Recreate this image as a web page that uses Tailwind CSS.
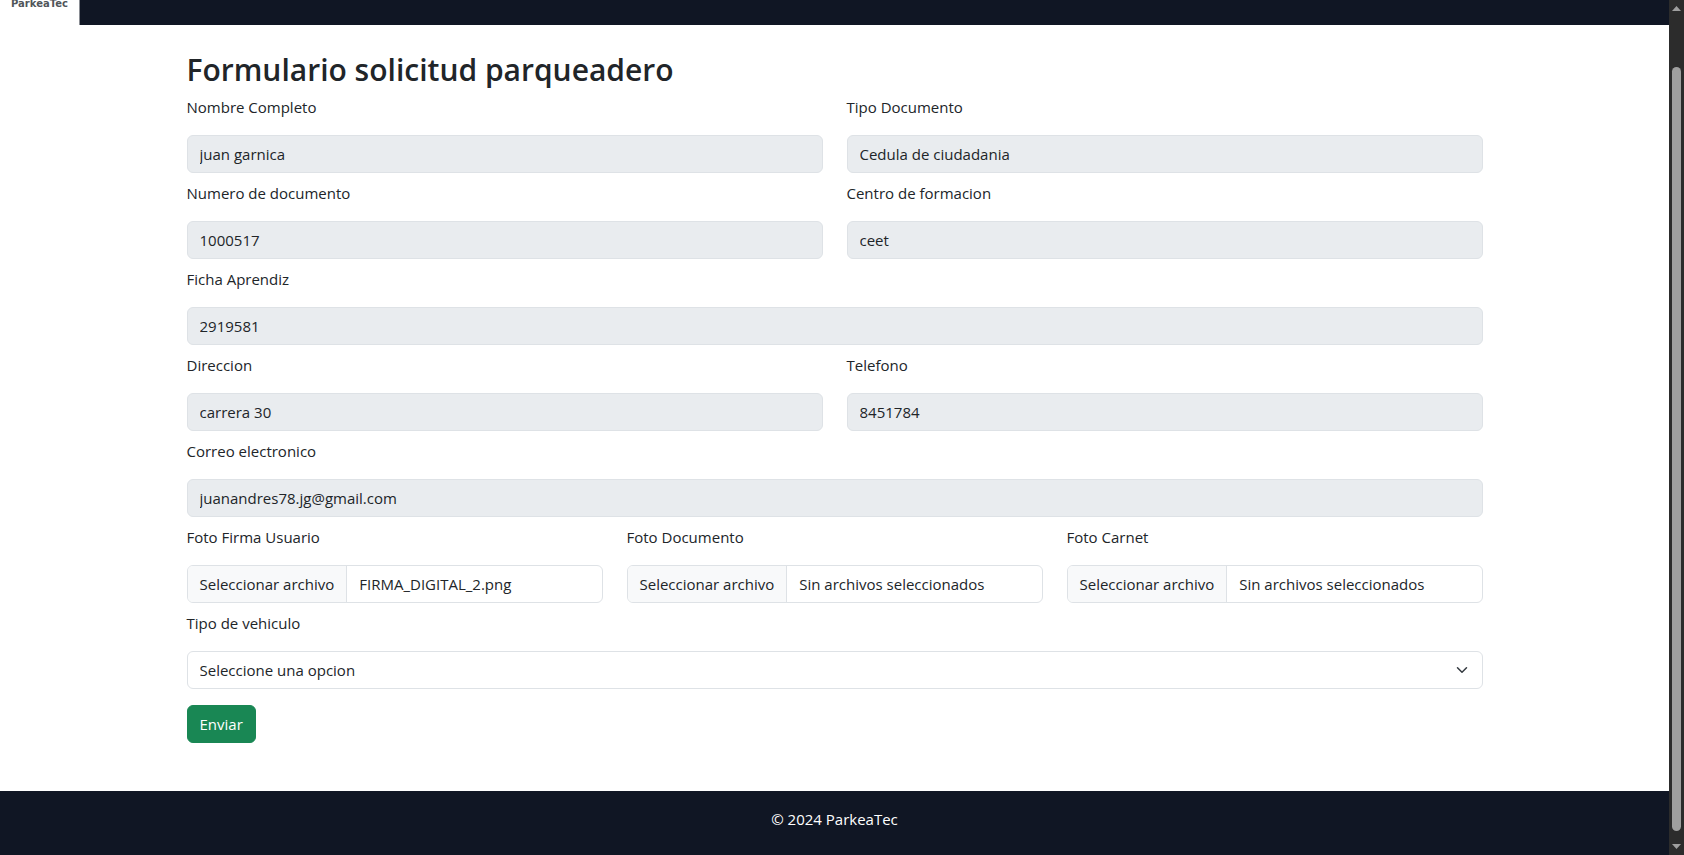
<!DOCTYPE html>
<html lang="es">
<head>
<meta charset="utf-8">
<meta name="viewport" content="width=device-width, initial-scale=1">
<title>ParkeaTec</title>
<script src="https://cdn.jsdelivr.net/npm/@tailwindcss/browser@4"></script>
</head>
<body class="flex min-h-screen bg-white font-['Open_Sans','Noto_Sans',sans-serif] text-[15px] leading-6 text-[#212529]">
<div class="flex min-w-0 flex-1 flex-col">
  <header class="flex h-[25px] bg-[#101624]">
    <a href="#" class="flex w-20 justify-center border-r border-[#8a8d94] bg-white font-['DejaVu_Sans',sans-serif] text-[10px] leading-2 font-bold text-[#50555a]">ParkeaTec</a>
  </header>

  <main class="mx-auto w-full max-w-[1320px] flex-1 px-3 pt-[26px] pb-12">
    <h1 class="mb-1.5 text-[30px] leading-[38px] font-semibold">Formulario solicitud parqueadero</h1>
    <form>
      <div class="grid grid-cols-6 gap-x-6 gap-y-2">
        <div class="col-span-3 flex flex-col gap-4">
          <label for="nombre">Nombre Completo</label>
          <input id="nombre" type="text" value="juan garnica" disabled class="h-[38px] w-full rounded-md border border-[#dee2e6] bg-[#e9ecef] px-3">
        </div>
        <div class="col-span-3 flex flex-col gap-4">
          <label for="tipo-doc">Tipo Documento</label>
          <input id="tipo-doc" type="text" value="Cedula de ciudadania" disabled class="h-[38px] w-full rounded-md border border-[#dee2e6] bg-[#e9ecef] px-3">
        </div>
        <div class="col-span-3 flex flex-col gap-4">
          <label for="numero">Numero de documento</label>
          <input id="numero" type="text" value="1000517" disabled class="h-[38px] w-full rounded-md border border-[#dee2e6] bg-[#e9ecef] px-3">
        </div>
        <div class="col-span-3 flex flex-col gap-4">
          <label for="centro">Centro de formacion</label>
          <input id="centro" type="text" value="ceet" disabled class="h-[38px] w-full rounded-md border border-[#dee2e6] bg-[#e9ecef] px-3">
        </div>
        <div class="col-span-6 flex flex-col gap-4">
          <label for="ficha">Ficha Aprendiz</label>
          <input id="ficha" type="text" value="2919581" disabled class="h-[38px] w-full rounded-md border border-[#dee2e6] bg-[#e9ecef] px-3">
        </div>
        <div class="col-span-3 flex flex-col gap-4">
          <label for="direccion">Direccion</label>
          <input id="direccion" type="text" value="carrera 30" disabled class="h-[38px] w-full rounded-md border border-[#dee2e6] bg-[#e9ecef] px-3">
        </div>
        <div class="col-span-3 flex flex-col gap-4">
          <label for="telefono">Telefono</label>
          <input id="telefono" type="text" value="8451784" disabled class="h-[38px] w-full rounded-md border border-[#dee2e6] bg-[#e9ecef] px-3">
        </div>
        <div class="col-span-6 flex flex-col gap-4">
          <label for="correo">Correo electronico</label>
          <input id="correo" type="email" value="juanandres78.jg@gmail.com" disabled class="h-[38px] w-full rounded-md border border-[#dee2e6] bg-[#e9ecef] px-3">
        </div>
        <div class="relative col-span-2 flex flex-col gap-4">
          <label for="firma">Foto Firma Usuario</label>
          <input id="firma" type="file" class="sr-only">
          <label for="firma" class="flex h-[38px] items-center overflow-hidden rounded-md border border-[#dee2e6]">
            <span class="flex h-full items-center border-r border-[#dee2e6] bg-[#f8f9fa] px-3">Seleccionar archivo</span>
            <span class="truncate px-3">FIRMA_DIGITAL_2.png</span>
          </label>
        </div>
        <div class="relative col-span-2 flex flex-col gap-4">
          <label for="documento">Foto Documento</label>
          <input id="documento" type="file" class="sr-only">
          <label for="documento" class="flex h-[38px] items-center overflow-hidden rounded-md border border-[#dee2e6]">
            <span class="flex h-full items-center border-r border-[#dee2e6] bg-[#f8f9fa] px-3">Seleccionar archivo</span>
            <span class="truncate px-3">Sin archivos seleccionados</span>
          </label>
        </div>
        <div class="relative col-span-2 flex flex-col gap-4">
          <label for="carnet">Foto Carnet</label>
          <input id="carnet" type="file" class="sr-only">
          <label for="carnet" class="flex h-[38px] items-center overflow-hidden rounded-md border border-[#dee2e6]">
            <span class="flex h-full items-center border-r border-[#dee2e6] bg-[#f8f9fa] px-3">Seleccionar archivo</span>
            <span class="truncate px-3">Sin archivos seleccionados</span>
          </label>
        </div>
        <div class="col-span-6 flex flex-col gap-4">
          <label for="vehiculo">Tipo de vehiculo</label>
          <div class="relative">
            <select id="vehiculo" class="block h-[38px] w-full appearance-none rounded-md border border-[#dee2e6] bg-white px-3 pr-9">
              <option>Seleccione una opcion</option>
            </select>
            <svg class="pointer-events-none absolute inset-y-0 right-[15px] my-auto h-3 w-3" viewBox="0 0 16 16" fill="none" stroke="#343a40" stroke-width="2" stroke-linecap="round" stroke-linejoin="round"><path d="m2 5 6 6 6-6"/></svg>
          </div>
        </div>
      </div>
      <button type="submit" class="mt-4 block h-[38px] rounded-md border border-[#198754] bg-[#198754] px-3 text-white">Enviar</button>
    </form>
  </main>

  <footer class="h-16 bg-[#101624] pt-4 text-center text-white">© 2024 ParkeaTec</footer>
</div>

<!-- Scrollbar -->
<div class="flex w-[15px] flex-col items-center bg-[#2c2c2c] py-1.5" aria-hidden="true">
  <svg class="h-[5px] w-[9px]" viewBox="0 0 9 5" fill="#9f9f9f"><path d="M4.500 0 9 5H0z"/></svg>
  <div class="mt-14 mb-[13px] w-[9px] flex-1 rounded-full bg-[#9f9f9f]"></div>
  <svg class="h-[5px] w-[9px]" viewBox="0 0 9 5" fill="#9f9f9f"><path d="M0 0h9L4.500 5z"/></svg>
</div>
</body>
</html>
